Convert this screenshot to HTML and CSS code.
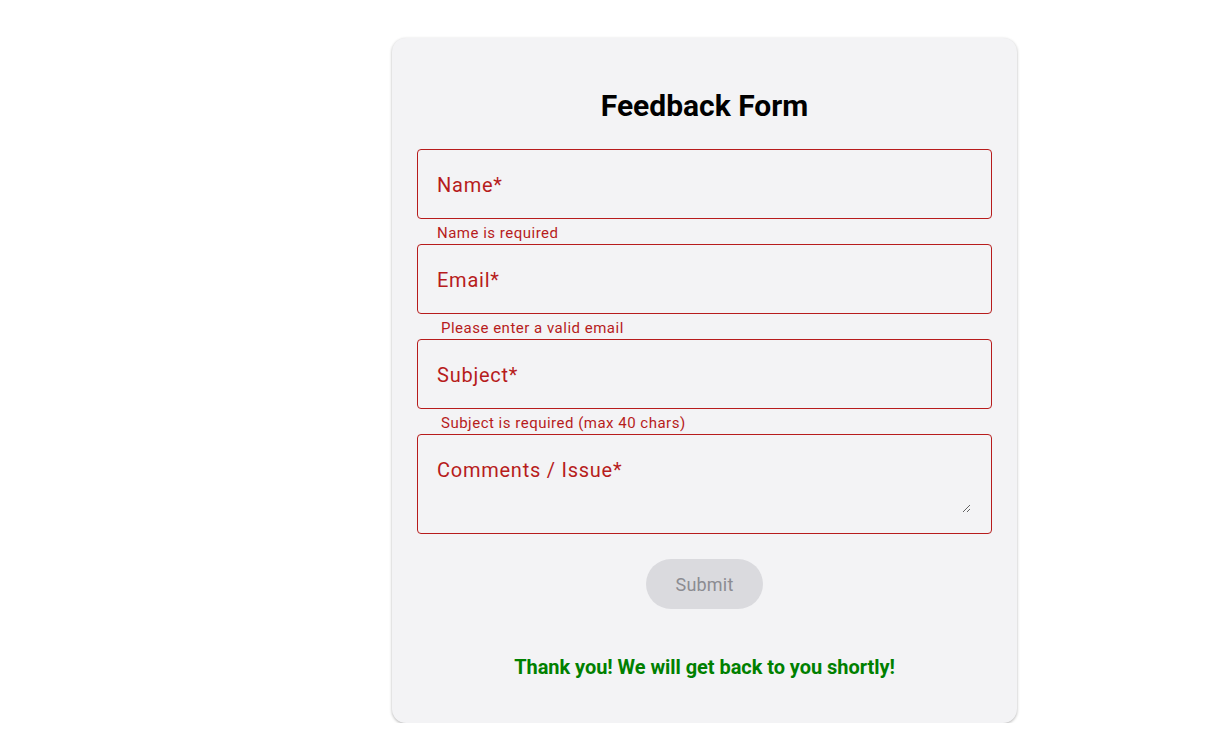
FILE: index.html
```html
<!DOCTYPE html>
<html>
<head>
<meta charset="utf-8">
<link rel="stylesheet" href="styles.css">
</head>
<body>
<div class="page">
  <form class="card">
    <h1 class="title">Feedback Form</h1>
    <div class="field">
      <input class="box" type="text" placeholder="Name*">
      <div class="helper">Name is required</div>
    </div>
    <div class="field">
      <input class="box" type="text" placeholder="Email*">
      <div class="helper indent">Please enter a valid email</div>
    </div>
    <div class="field">
      <input class="box" type="text" placeholder="Subject*">
      <div class="helper indent">Subject is required (max 40 chars)</div>
    </div>
    <div class="field">
      <div class="area-wrap">
        <textarea class="area" placeholder="Comments / Issue*"></textarea>
      </div>
    </div>
    <div class="actions">
      <button class="submit" type="button" disabled>Submit</button>
    </div>
    <p class="thanks">Thank you! We will get back to you shortly!</p>
  </form>
</div>
</body>
</html>
```
FILE: styles.css
```css
html, body {
  margin: 0;
  padding: 0;
  background: #ffffff;
  font-family: Roboto, "Liberation Sans", sans-serif;
}
.page {
  display: flex;
  padding-top: 38px;
  padding-left: 392px;
}
.card {
  width: 625px;
  box-sizing: border-box;
  background: #f3f3f5;
  border-radius: 14px;
  box-shadow: 0 1px 3px rgba(0,0,0,0.3);
  padding: 48px 25px 42px;
  display: flex;
  flex-direction: column;
}
.title {
  margin: 0 0 23px;
  text-align: center;
  font-size: 30px;
  font-weight: 700;
  line-height: 40px;
  color: #000;
}
.field {
  display: flex;
  flex-direction: column;
}
.box {
  box-sizing: border-box;
  height: 70px;
  width: 100%;
  border: 1px solid #b71c1c;
  border-radius: 4px;
  background: transparent;
  padding: 2px 19px 0;
  font-family: Roboto, "Liberation Sans", sans-serif;
  font-size: 20px;
  color: #b71c1c;
  letter-spacing: 0.75px;
  outline: none;
}
.box::placeholder,
.area::placeholder {
  color: #b71c1c;
  opacity: 1;
}
.area-wrap {
  box-sizing: border-box;
  height: 100px;
  border: 1px solid #b71c1c;
  border-radius: 4px;
  padding: 22px 20px 20px 19px;
  display: flex;
}
.area {
  flex: 1;
  height: 56px;
  border: none;
  outline: none;
  background: transparent;
  padding: 0;
  margin: 0;
  resize: vertical;
  font-family: Roboto, "Liberation Sans", sans-serif;
  font-size: 20px;
  line-height: 26px;
  letter-spacing: 0.75px;
  color: #b71c1c;
}
.helper {
  height: 25px;
  line-height: 20px;
  padding: 4px 0 0 20px;
  box-sizing: border-box;
  font-size: 15px;
  letter-spacing: 0.5px;
  color: #b71c1c;
}
.helper.indent {
  padding-left: 24px;
}
.actions {
  display: flex;
  justify-content: center;
  margin-top: 25px;
}
.submit {
  width: 117px;
  height: 50px;
  border: none;
  border-radius: 25px;
  background: #dadade;
  color: #8c8c92;
  font-family: Roboto, "Liberation Sans", sans-serif;
  font-size: 18px;
  letter-spacing: 0.2px;
}
.thanks {
  margin: 44px 0 0;
  text-align: center;
  font-size: 20px;
  font-weight: 700;
  line-height: 28px;
  color: #008000;
  letter-spacing: -0.05px;
}
```
